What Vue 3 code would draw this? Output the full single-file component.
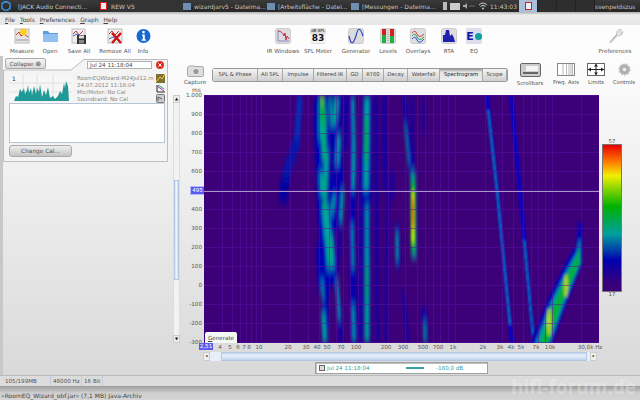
<script setup>
const menu = ['File', 'Tools', 'Preferences', 'Graph', 'Help']
const tabs = [
  { t: 'SPL & Phase', w: 45 }, { t: 'All SPL', w: 25 }, { t: 'Impulse', w: 31 },
  { t: 'Filtered IR', w: 33 }, { t: 'GD', w: 16 }, { t: 'RT60', w: 21 },
  { t: 'Decay', w: 24 }, { t: 'Waterfall', w: 32 }, { t: 'Spectrogram', w: 43, on: true },
  { t: 'Scope', w: 24 }
]
const yTicks = ['1.000', '900', '800', '700', '600', '500', '400', '300', '200', '100', '0', '-100', '-200', '-300']
const xTicks = [
  ['4', 222], ['5', 232], ['6', 240], ['7', 246], ['8', 251], ['10', 261], ['20', 290], ['30', 308],
  ['40', 319], ['50', 329], ['70', 343], ['100', 358], ['200', 388], ['300', 405], ['500', 425],
  ['700', 440], ['1k', 455], ['2k', 485], ['3k', 502], ['4k', 513], ['5k', 523], ['7k', 538], ['10k', 552]
]
const gridX = [222, 232, 240, 246, 251, 256, 261, 290, 308, 319, 329, 336, 343, 350, 358, 388, 405, 417, 425, 433, 440, 448, 455, 485, 502, 513, 523, 531, 538, 545, 552, 581]
const gridY = yTicks.map((_, i) => 95 + i * 19)

const BLUE = '#0000b4'
const TEAL = '#00a4a0'
const SEA = '#00b070'
const GREEN = '#00b000'

// ridges of the spectrogram: colour, width, path
const ridges = [
  ['#0030c0', 5, 'M300 95 L298 125 L296 150'],
  ['#0018b0', 8, 'M297 140 L288 168 L285 185'],
  ['#0000a0', 9, 'M285 180 L283 202'],

  // 40-50 Hz lobes
  [BLUE, 15, 'M322 95 C320 130 323 160 324 190 C325 230 330 260 328 285'],
  [BLUE, 6, 'M326 280 L325 343'],
  [BLUE, 4, 'M318 245 L320 290'],
  [BLUE, 11, 'M337 95 L335 130 L338 170 L337 200 L336 230'],
  [BLUE, 3, 'M340 235 L336 280 L340 310 L341 343'],
  [BLUE, 3, 'M346 95 L345 150'],
  [BLUE, 6, 'M352 95 L353 170 L352 230 L354 343'],
  [BLUE, 9, 'M367 95 L367 200'],
  [BLUE, 7, 'M367 200 L367 343'],
  [BLUE, 2.5, 'M361 150 L360 343'],
  [BLUE, 2.5, 'M376 95 L378 343'],
  [BLUE, 3, 'M384 95 L385 190'],
  [BLUE, 2, 'M388 190 L386 343'],
  [BLUE, 2.5, 'M392 170 L392 200'],
  [BLUE, 3, 'M404 95 L409 150 L412 180'],
  [BLUE, 2, 'M412 95 L413 175'],
  [BLUE, 1.5, 'M424 95 L424 135'],
  [BLUE, 4, 'M397 225 L398 268'],
  [BLUE, 2, 'M403 290 L408 343'],
  [BLUE, 4, 'M424 308 L426 343'],

  // brighter cores
  [TEAL, 6, 'M322 100 L322 140'],
  [TEAL, 4, 'M327 150 L325 190'],
  [TEAL, 4, 'M321 172 L322 195'],
  [TEAL, 7, 'M325 205 L328 240'],
  [TEAL, 8, 'M329 235 L331 268'],
  [TEAL, 3, 'M335 195 L331 215'],
  [TEAL, 3, 'M343 190 L341 222'],
  [TEAL, 4, 'M323 312 L325 343'],
  [TEAL, 2, 'M322 280 L323 300'],
  [TEAL, 4, 'M337 97 L334 125'],
  [TEAL, 2.5, 'M330 97 L331 125'],
  [TEAL, 3.5, 'M339 135 L337 165'],
  [TEAL, 2.5, 'M337 280 L339 320'],
  [TEAL, 2.5, 'M353 97 L354 150'],
  [TEAL, 3, 'M354 145 L353 190'],
  [TEAL, 2, 'M352 225 L353 268'],
  [TEAL, 2.5, 'M353 305 L354 343'],
  [TEAL, 5, 'M367 97 L366 190'],
  [TEAL, 3, 'M367 205 L367 245'],
  [TEAL, 3.5, 'M367 245 L367 343'],
  [TEAL, 1.5, 'M405 125 L409 165'],
  [TEAL, 2, 'M397 232 L397 262'],
  [TEAL, 2, 'M425 322 L425 343'],

  [SEA, 4, 'M324 112 L324 160'],
  [SEA, 3, 'M325 175 L325 215'],
  [GREEN, 4, 'M322 95 L323 122'],
  [SEA, 3, 'M336 100 L336 120'],
  [GREEN, 2.5, 'M367 118 L366 160'],
  [GREEN, 2, 'M367 265 L367 300'],
  [SEA, 2, 'M367 305 L367 340'],
  [SEA, 2.5, 'M329 240 L330 262'],
  ['#90d800', 2, 'M322 95 L322 102'],

  // the hot spot near 350 Hz
  [TEAL, 5, 'M413 172 L414 258'],
  [GREEN, 3.5, 'M413 178 L413 252']
]
const hot = [
  ['#d8e800', 3, 'M413 190 L413 244'],
  ['#ff9000', 2, 'M413 196 L413 230'],
  ['#f02000', 1.4, 'M413 203 L413 224']
]
const lines = [
  'M487 95 L497 190 L512 343',
  'M511 95 L520 190 L533 335'
]
</script>

<template>
  <div class="screen">
    <div class="taskbar">
      <svg class="tb-logo" width="10" height="10" viewBox="0 0 10 10"><path d="M5 0 L9 2.5 V7.5 L5 10 L1 7.5 V2.5 Z" fill="none" stroke="#3a8ad0" stroke-width="1.6" /></svg>
      <div class="task t-jack">[JACK Audio Connecti...</div>
      <div class="task t-rew"><i class="rew-ico"></i>REW V5</div>
      <div class="task t-a"><i class="folder"></i>wizardjarv5 - Dateima...</div>
      <div class="task t-b"><i class="folder"></i>[Arbeitsfläche - Datei...</div>
      <div class="task t-c"><i class="folder"></i>[Messungen - Dateima...</div>
      <div class="tray">
        <i class="bat"></i><i class="mail"></i>
        <svg width="12" height="8" viewBox="0 0 12 8"><path d="M0 3 H2 L4 1 V7 L2 5 H0 Z" fill="#aaa" /><path d="M6 4 H12" stroke="#666" /></svg>
        <svg width="10" height="8" viewBox="0 0 10 8"><path d="M1 3 Q5 -1 9 3 M2.5 4.5 Q5 2 7.5 4.5" fill="none" stroke="#ccc" /><circle cx="5" cy="6.5" r="1" fill="#ccc" /></svg>
      </div>
      <div class="clock">11:43:03</div>
      <div class="pager"><span class="page on"><i class="rew-ico"></i></span><span class="page"></span><span class="page"></span><span class="page"></span></div>
      <div class="user">svenpeldszus</div>
    </div>

    <div class="menubar">
      <span v-for="m in menu" :key="m" class="menu"><u>{{ m[0] }}</u>{{ m.slice(1) }}</span>
    </div>

    <div class="toolbar">
      <div class="tool" style="width:28px">
        <svg width="16" height="16" viewBox="0 0 16 16"><rect x="1" y="1" width="14" height="14" fill="#e4e4e4" stroke="#bbb" /><path d="M2 7 L5 4 L7 8 L10 6 L14 9" fill="none" stroke="#c33" /><path d="M2 12 H14" stroke="#99a" /><circle cx="9.5" cy="4" r="3.4" fill="#ffd020" /></svg>
        <span>Measure</span>
      </div>
      <div class="tool" style="width:28px">
        <svg width="17" height="16" viewBox="0 0 17 16"><path d="M1 3 H6 L7.5 5 H16 V14 H1 Z" fill="#5a9ee0" /><rect x="1" y="6" width="15" height="8" fill="#8fc0f0" /></svg>
        <span>Open</span>
      </div>
      <div class="tool" style="width:30px">
        <svg width="16" height="16" viewBox="0 0 16 16"><rect x="1" y="1" width="13" height="14" fill="#eee" stroke="#bbb" /><path d="M2 6 L5 3 L8 7 L12 3" fill="none" stroke="#c33" /><path d="M2 8 L6 6 L12 9" fill="none" stroke="#36c" /><rect x="6" y="7" width="9" height="9" fill="#333" /><rect x="8" y="7.5" width="5" height="3" fill="#ddd" /><rect x="8" y="12" width="5" height="3.5" fill="#888" /></svg>
        <span>Save All</span>
      </div>
      <div class="tool" style="width:42px">
        <svg width="16" height="16" viewBox="0 0 16 16"><rect x="1" y="1" width="14" height="14" fill="#eee" stroke="#bbb" /><path d="M2 6 L5 3 L8 7 L12 3" fill="none" stroke="#c33" /><path d="M2 11 L6 9 L12 12" fill="none" stroke="#36c" /><path d="M5 5 L14 15 M14 5 L5 15" stroke="#d01010" stroke-width="2.4" /></svg>
        <span>Remove All</span>
      </div>
      <div class="tool" style="width:14px">
        <svg width="15" height="15" viewBox="0 0 15 15"><circle cx="7.5" cy="7.5" r="7" fill="#1468d0" /><circle cx="7.5" cy="3.6" r="1.4" fill="#fff" /><path d="M6 6 H8.8 V11 H10 V12.2 H5.5 V11 H6.8 V7.2 H6 Z" fill="#fff" /></svg>
        <span>Info</span>
      </div>

      <div class="tool tool-mid" style="width:36px">
        <svg width="16" height="16" viewBox="0 0 16 16"><rect x="0.5" y="0.5" width="15" height="15" rx="2" fill="#dcdcdc" stroke="#ccc" /><path d="M3 2 V13 H14" fill="none" stroke="#88c" /><path d="M3 3 C6 3 8 5 9 8 L10 5 L11 12 L12 8 L14 11" fill="none" stroke="#c03050" /></svg>
        <span>IR Windows</span>
      </div>
      <div class="tool" style="width:34px">
        <div class="spl"><b>dB SPL</b><em>83</em></div>
        <span>SPL Meter</span>
      </div>
      <div class="tool" style="width:42px">
        <svg width="16" height="16" viewBox="0 0 16 16"><rect x="0.5" y="0.5" width="15" height="15" rx="2" fill="#dcdcdc" stroke="#ccc" /><path d="M1 8 C3 17 5 17 8 8 C10 -1 12 -1 15 8" fill="none" stroke="#3040c0" stroke-width="1.2" /></svg>
        <span>Generator</span>
      </div>
      <div class="tool" style="width:22px">
        <svg width="16" height="16" viewBox="0 0 16 16"><rect x="0.5" y="0.5" width="15" height="15" rx="2" fill="#dcdcdc" stroke="#ccc" /><rect x="2" y="1" width="4" height="14" fill="#20b040" /><rect x="2" y="1" width="4" height="6" fill="#d02020" /><rect x="10" y="1" width="4" height="14" fill="#20b040" /><rect x="10" y="1" width="4" height="7" fill="#d02020" /><path d="M8 2 V14" stroke="#999" stroke-dasharray="1 1" /></svg>
        <span>Levels</span>
      </div>
      <div class="tool" style="width:38px">
        <svg width="16" height="16" viewBox="0 0 16 16"><rect x="0.5" y="0.5" width="15" height="15" rx="2" fill="#dedede" stroke="#ccc" /><path d="M2 5 Q5 1 7 6 T14 6" fill="none" stroke="#d04040" /><path d="M2 8 Q5 4 7 9 T14 9" fill="none" stroke="#20a060" /><path d="M2 11 Q5 7 7 12 T14 11" fill="none" stroke="#3050d0" /></svg>
        <span>Overlays</span>
      </div>
      <div class="tool" style="width:24px">
        <svg width="16" height="16" viewBox="0 0 16 16"><rect x="0.5" y="0.5" width="15" height="15" rx="2" fill="#dedede" stroke="#ccc" /><path d="M2 14 V7 L4 7 L5 2 L8 2 L9 8 L11 6 L13 10 L14 14 Z" fill="#2020b0" /></svg>
        <span>RTA</span>
      </div>
      <div class="tool" style="width:26px">
        <div class="eq-ico"><b>E</b><i></i></div>
        <span>EQ</span>
      </div>

      <div class="tool tool-end" style="width:40px">
        <svg width="17" height="17" viewBox="0 0 17 17"><path d="M2 15 L10 6.5 M10 6.5 C9 3 12 1 15 2 L12.5 4.5 L14 6 L16 3.5 C16.5 7 13 9 10.5 8 L3 16 Z" fill="#eee" stroke="#aaa" stroke-width="0.8" /></svg>
        <span>Preferences</span>
      </div>
    </div>

    <div class="main">
      <aside class="side">
        <div class="cal">
          <svg class="cal-outline" width="166" height="107" viewBox="0 0 166 107">
            <path d="M0.5 14 H68 L81 3.5 H164.5 V105.5 H0.5 Z" fill="#f4f4f4" stroke="#bdbdbd" />
          </svg>
          <button class="collapse">Collapse <i>⊗</i></button>
          <div class="cal-top">
            <div class="date-input">Jul 24 11:18:04</div>
            <svg class="close" width="8" height="8" viewBox="0 0 8 8"><circle cx="4" cy="4" r="4" fill="#d8301c" /><path d="M2.4 2.4 L5.6 5.6 M5.6 2.4 L2.4 5.6" stroke="#fff" /></svg>
          </div>
          <div class="cal-info">
            <svg class="thumb" width="63" height="27" viewBox="0 0 63 27">
              <rect width="63" height="27" fill="#f6f6f6" />
              <path d="M0 9 H63 M0 18 H63 M14 0 V27 M28 0 V27 M44 0 V27" stroke="#e0e0e0" />
              <path d="M5 27 L7 22 L9 23 L11 15 L13 18 L15 14 L16 20 L18 16 L19 11 L20 19 L22 14 L23 21 L25 12 L27 20 L28 14 L30 18 L31 10 L33 23 L35 16 L37 21 L39 13 L41 24 L44 22 L46 25 L49 22 L51 17 L53 20 L55 9 L56 14 L57 7 L59 12 L60 27 Z" fill="#1f9a96" />
              <text x="3" y="7" class="thumb-t">1</text>
            </svg>
            <div class="meta">
              <div>RoomEQWizard-M24Jul12.m</div>
              <div>24.07.2012 11:18:04</div>
              <div>Mic/Meter: No Cal</div>
              <div>Soundcard: No Cal</div>
            </div>
            <div class="side-ico">
              <svg width="9" height="9" viewBox="0 0 9 9"><rect width="9" height="9" fill="#807030" /><path d="M0 8 L4 3 L6 5 L9 0" stroke="#f0d040" fill="none" /></svg>
              <svg width="9" height="9" viewBox="0 0 9 9"><path d="M1 1 V8 H9" fill="none" stroke="#222" /><path d="M1 2 L8 7" stroke="#a030c0" /><path d="M2 1 L8 5" stroke="#20a060" /></svg>
              <svg width="9" height="9" viewBox="0 0 9 9"><rect x="0.5" y="0.5" width="8" height="8" rx="1" fill="#ccc" stroke="#777" /><path d="M2 7 V3 L6 5" fill="none" stroke="#555" /></svg>
            </div>
          </div>
          <div class="cal-list"></div>
          <button class="change">Change Cal...</button>
        </div>
      </aside>

      <section class="center">
        <div class="head">
          <div class="capture">
            <svg width="17" height="12" viewBox="0 0 17 12"><rect x="0.5" y="1.5" width="16" height="10" rx="1.5" fill="#ddd" stroke="#aaa" /><rect x="2" y="0" width="5" height="2" fill="#ccc" /><circle cx="9" cy="6.5" r="3.2" fill="#999" stroke="#eee" /></svg>
            <span>Capture</span>
          </div>
          <div class="tabs">
            <div v-for="tab in tabs" :key="tab.t" class="tab" :class="{ on: tab.on }" :style="{ width: tab.w + 'px' }">{{ tab.t }}</div>
          </div>
          <div class="views">
            <div class="view" style="width:36px">
              <div class="scr-ico"><i></i><b></b></div>
              <span>Scrollbars</span>
            </div>
            <div class="view" style="width:36px">
              <svg width="18" height="13" viewBox="0 0 18 13"><rect x="0.5" y="0.5" width="17" height="12" fill="#fff" stroke="#888" /><path d="M6 1 V12 M9.5 1 V12 M12 1 V12 M14 1 V12 M15.5 1 V12" stroke="#bbb" /></svg>
              <span>Freq. Axis</span>
            </div>
            <div class="view" style="width:24px">
              <svg width="18" height="13" viewBox="0 0 18 13"><rect x="0.5" y="0.5" width="17" height="12" fill="#fff" stroke="#666" /><path d="M1 6.5 H17 M9 1 V12" stroke="#222" /><path d="M1 6.5 L4 4.5 V8.5 Z M17 6.5 L14 4.5 V8.5 Z M9 1 L7 3.5 H11 Z M9 12 L7 9.5 H11 Z" fill="#222" /></svg>
              <span>Limits</span>
            </div>
            <div class="view" style="width:32px">
              <svg width="13" height="13" viewBox="0 0 13 13"><circle cx="6.5" cy="6.5" r="5" fill="#aaa" stroke="#bbb" stroke-width="2" stroke-dasharray="2 1" /><circle cx="6.5" cy="6.5" r="2" fill="#e8e8e8" /></svg>
              <span>Controls</span>
            </div>
          </div>
        </div>

        <div class="body">
          <div class="vscroll">
            <div class="sb-btn">▲</div>
            <div class="vtrack"><div class="vthumb"></div></div>
            <div class="sb-btn">▼</div>
          </div>
          <div class="yaxis">
            <span class="ms">ms</span>
            <span v-for="y in yTicks" :key="y" class="ytick">{{ y }}</span>
            <span class="cursor-tag">495</span>
          </div>
          <div class="plot">
            <svg class="spec" width="395" height="248" viewBox="204 95 395 248">
              <defs>
                <filter id="soft" filterUnits="userSpaceOnUse" x="204" y="60" width="395" height="320"><feGaussianBlur stdDeviation="1.5 5" /></filter>
                <filter id="hot" filterUnits="userSpaceOnUse" x="204" y="60" width="395" height="320"><feGaussianBlur stdDeviation="0.8 3" /></filter>
                <filter id="thin" filterUnits="userSpaceOnUse" x="204" y="60" width="395" height="320"><feGaussianBlur stdDeviation="0.8" /></filter>
                <filter id="wedge" filterUnits="userSpaceOnUse" x="204" y="60" width="395" height="320"><feGaussianBlur stdDeviation="1.7" /></filter>
              </defs>
              <rect x="204" y="95" width="395" height="248" fill="#3c0078" />
              <g filter="url(#soft)">
                <path v-for="(r, i) in ridges" :key="i" :d="r[2]" :stroke="r[0]" :stroke-width="r[1]" fill="none" />
              </g>
              <g filter="url(#hot)">
                <path v-for="(r, i) in hot" :key="i" :d="r[2]" :stroke="r[0]" :stroke-width="r[1]" fill="none" />
              </g>
              <g filter="url(#thin)">
                <path v-for="l in lines" :key="l" :d="l" stroke="#0000d0" stroke-width="3.4" fill="none" />
                <path d="M488 110 L497 190 L510 325" stroke="#00a4b0" stroke-width="1.3" fill="none" />
                <path d="M524 240 L533 335" stroke="#00a4b0" stroke-width="1.2" fill="none" />
              </g>
              <g filter="url(#wedge)">
                <path d="M530 345 L548 300 L566 262 L576 246 L579 222 L582 222 L582 264 L566 305 L552 345 Z" fill="#0000c0" />
                <path d="M535 345 L551 303 L567 270 L577 252 L580 236 L581 262 L564 303 L549 345 Z" fill="#00a090" />
                <path d="M540 345 L553 308 L566 278 L575 262 L579 248 L579 264 L562 302 L547 345 Z" fill="#00b030" />
                <ellipse cx="566" cy="286" rx="1.6" ry="12" fill="#c8e000" />
                <ellipse cx="549" cy="322" rx="2" ry="14" fill="#b8e000" />
              </g>
              <g stroke="#5a10a8" stroke-width="1" opacity="0.5">
                <path v-for="x in gridX" :key="x" :d="`M${x + 0.5} 95 V343`" />
                <path v-for="y in gridY" :key="y" :d="`M204 ${y + 0.5} H599`" />
              </g>
              <path d="M204 191.5 H599" stroke="#a898c8" stroke-width="1" />
            </svg>
            <button class="generate"><u>G</u>enerate</button>
          </div>
          <div class="scale">
            <span>57</span>
            <div class="ramp"></div>
            <span>17</span>
          </div>
        </div>

        <div class="xaxis">
          <span class="x-tag">2,51</span>
          <span v-for="t in xTicks" :key="t[0]" class="xtick" :style="{ left: t[1] - 172 + 'px' }">{{ t[0] }}</span>
          <span class="xtick" style="left:420px">30,0k Hz</span>
        </div>
        <div class="hscroll">
          <div class="sb-btn">◂</div>
          <div class="htrack"><div class="hthumb"></div></div>
          <div class="sb-btn">▸</div>
        </div>
        <div class="legend">
          <i class="check"></i>
          <span class="l-name">Jul 24 11:18:04</span>
          <i class="l-line"></i>
          <span class="l-val">-180,0 dB</span>
        </div>
      </section>
    </div>

    <div class="status">
      <span style="width:48px">105/199MB</span>
      <span style="width:31px">48000 Hz</span>
      <span style="width:21px">16 Bit</span>
    </div>
    <div class="bottom">»RoomEQ_Wizard_obf.jar« (7,1 MB) Java-Archiv</div>
    <div class="mark">hifi-forum.de</div>
  </div>
</template>

<style scoped>
.screen {
  position: relative;
  width: 640px;
  height: 400px;
  overflow: hidden;
  display: flex;
  flex-direction: column;
  font-family: "DejaVu Sans", sans-serif;
  font-size: 6px;
  color: #555;
  background: #ddd;
}

/* desktop panel */
.taskbar {
  height: 12px;
  flex: none;
  display: flex;
  align-items: center;
  background: linear-gradient(#3a3a3a, #262626);
  color: #c8c8c8;
  font-size: 6px;
  white-space: nowrap;
}
.tb-logo { margin: 0 2px 0 1px; flex: none; }
.task { display: flex; align-items: center; gap: 2px; height: 12px; overflow: hidden; }
.t-jack { width: 86px; padding-left: 5px; box-sizing: border-box; }
.t-rew { width: 83px; background: #333; padding-left: 1px; }
.t-a { width: 84px; }
.t-b { width: 84px; }
.t-c { width: 92px; }
.rew-ico { display: inline-block; width: 7px; height: 8px; background: #eee; border: 1px solid #c22; box-sizing: border-box; margin-right: 2px; }
.folder { display: inline-block; width: 8px; height: 7px; background: #6f8fb0; margin-right: 1px; flex: none; }
.tray { display: flex; align-items: center; gap: 3px; width: 47px; flex: none; }
.bat { width: 4px; height: 8px; background: #bbb; }
.mail { width: 10px; height: 7px; background: #ccc; }
.clock { width: 29px; flex: none; }
.pager { display: flex; height: 12px; width: 76px; flex: none; }
.page { width: 18px; background: #2e2e2e; border-right: 1px solid #222; display: flex; align-items: center; justify-content: center; }
.page.on { background: #a8c0dc; }
.page .rew-ico { margin: 0; }
.user { flex: none; }

.menubar {
  height: 13px;
  flex: none;
  box-sizing: border-box;
  padding: 3px 0 0 5px;
  display: flex;
  gap: 5px;
  background: linear-gradient(#b0b0b0 0, #ececec 3px, #e6e6e6);
  color: #444;
}
.menu { line-height: 9px; }

.toolbar {
  height: 31px;
  flex: none;
  display: flex;
  padding-left: 8px;
  background: #fdfdfd;
}
.tool { display: flex; flex-direction: column; align-items: center; flex: none; padding-top: 3px; }
.tool svg { display: block; height: 16px; }
.tool span { margin-top: 4px; white-space: nowrap; line-height: 7px; font-size: 5.6px; }
.tool-mid { margin-left: 115px; }
.tool-end { margin-left: 108px; }
.spl { width: 16px; height: 16px; background: #ddd; border-radius: 2px; text-align: center; line-height: 7px; color: #111; }
.spl b { display: block; font-size: 4px; font-weight: normal; line-height: 6px; }
.spl em { display: block; font-size: 9px; font-style: normal; font-weight: bold; line-height: 9px; background: #f4f4f4; }
.eq-ico { width: 16px; height: 16px; background: #dde; border-radius: 2px; display: flex; align-items: center; justify-content: center; gap: 1px; color: #1018a0; }
.eq-ico b { font-size: 11px; line-height: 11px; }
.eq-ico i { width: 7px; height: 7px; border-radius: 50%; background: #10a0a0; }

/* main window body */
.main {
  flex: 1;
  min-height: 0;
  display: flex;
  background: linear-gradient(#fdfdfd, #d9d9d9);
  border-left: 3px solid #c8c8c8;
}
.side { width: 167px; flex: none; }
.cal { position: relative; width: 166px; height: 107px; }
.cal-outline { position: absolute; left: 0; top: 0; }
.collapse {
  position: absolute;
  left: 2px;
  top: 2px;
  width: 41px;
  height: 11px;
  padding: 0;
  font: 5.6px "DejaVu Sans", sans-serif;
  color: #555;
  background: linear-gradient(#f6f6f6, #d8d8d8);
  border: 1px solid #aaa;
  border-radius: 2px;
}
.collapse i { font-style: normal; font-size: 7px; }
.cal-top { position: absolute; left: 84px; top: 5px; display: flex; align-items: center; gap: 4px; }
.date-input { width: 65px; height: 8px; box-sizing: border-box; background: #fff; border: 1px solid #b0b0b0; color: #444; line-height: 7px; padding-left: 2px; font-size: 5.6px; }
.cal-info { position: absolute; left: 6px; top: 18px; display: flex; width: 155px; }
.thumb { flex: none; }
.thumb-t { font-size: 6px; fill: #333; }
.meta { margin-left: 5px; font-size: 5.5px; line-height: 7px; color: #888; padding-top: 1px; white-space: nowrap; width: 78px; }
.side-ico { display: flex; flex-direction: column; gap: 1px; margin-left: 2px; }
.cal-list { position: absolute; left: 6px; top: 47px; width: 156px; height: 40px; box-sizing: border-box; background: #fff; border: 1px solid #b8c4d8; }
.change {
  position: absolute;
  left: 6px;
  top: 89px;
  width: 63px;
  height: 12px;
  padding: 0;
  font: 5.8px "DejaVu Sans", sans-serif;
  color: #555;
  background: linear-gradient(#eee, #c4c4c4);
  border: 1px solid #aaa;
  border-radius: 3px;
}

.center { flex: 1; min-width: 0; display: flex; flex-direction: column; }
.head { height: 39px; flex: none; display: flex; }
.capture { width: 43px; flex: none; display: flex; flex-direction: column; align-items: center; padding: 9px 0 0 7px; box-sizing: border-box; font-size: 5.6px; }
.capture svg { flex: none; }
.capture span { line-height: 8px; margin-top: 1px; }
.tabs {
  display: flex;
  height: 12px;
  margin-top: 13px;
  border-radius: 2px;
  box-shadow: 0 0 0 1px #999;
  flex: none;
}
.tab {
  flex: none;
  box-sizing: border-box;
  text-align: center;
  line-height: 11px;
  font-size: 5.3px;
  color: #444;
  white-space: nowrap;
  background: linear-gradient(#f4f4f4, #cfcfcf);
  border-right: 1px solid #aaa;
}
.tab.on { background: linear-gradient(#9a9a9a 0, #e4e4e4 3px, #ececec); color: #222; }
.views { display: flex; margin-left: 5px; padding-top: 7px; }
.view { display: flex; flex-direction: column; align-items: center; flex: none; font-size: 5.4px; }
.view svg { flex: none; }
.view span { margin-top: 3px; line-height: 7px; white-space: nowrap; }
.scr-ico { width: 21px; height: 14px; box-sizing: border-box; background: #ccc; border: 1px solid #666; border-radius: 2px; padding: 2px; display: flex; flex-direction: column; gap: 1px; }
.scr-ico i { display: block; height: 6px; margin-left: 3px; background: #f4f4f4; }
.scr-ico b { display: block; height: 2px; background: #666; }

.body { display: flex; height: 248px; flex: none; }
.vscroll { width: 7px; flex: none; margin-left: 3px; display: flex; flex-direction: column; }
.sb-btn { width: 7px; height: 8px; flex: none; background: #eee; border: 1px solid #ccc; box-sizing: border-box; font-size: 4px; line-height: 6px; text-align: center; color: #111; overflow: hidden; }
.vtrack { flex: 1; background: #f2f2f2; padding-top: 77px; border: 1px solid #ddd; border-width: 0 1px; box-sizing: border-box; min-height: 0; }
.vthumb { height: 100px; background: linear-gradient(90deg, #cfe0f4, #eef4fb, #c4d8ee); border: 1px solid #b4c8e4; box-sizing: border-box; }
.yaxis { position: relative; width: 22px; flex: none; display: flex; flex-direction: column; justify-content: space-between; align-items: flex-end; margin: -3px 0; padding-right: 2px; color: #555; }
.ytick { line-height: 7px; font-size: 5.6px; }
.ms { position: absolute; right: 3px; top: -6px; line-height: 7px; }
.cursor-tag { position: absolute; right: 0; top: 95px; width: 13px; height: 7px; line-height: 7px; text-align: center; color: #fff; background: #5a5af0; outline: 1px solid #b8b8ff; font-size: 5.6px; }
.plot { position: relative; width: 395px; height: 248px; flex: none; }
.spec { display: block; }
.generate {
  position: absolute;
  left: 1px;
  bottom: 0;
  width: 32px;
  height: 11px;
  padding: 0;
  font: 5.6px "DejaVu Sans", sans-serif;
  color: #444;
  background: #f2f8f4;
  border: 0;
  border-radius: 2px 2px 0 0;
}
.scale { width: 20px; flex: none; margin-left: 3px; display: flex; flex-direction: column; align-items: center; padding-top: 44px; font-size: 5.4px; }
.scale span { line-height: 5px; }
.ramp {
  width: 20px;
  height: 148px;
  flex: none;
  box-sizing: border-box;
  border: 1px solid #777;
  background: linear-gradient(#e80000 0, #ff8000 12%, #f0f000 21%, #00b000 42%, #00a0a0 61%, #0000b0 79%, #3c0078 96%);
}

.xaxis { position: relative; height: 9px; flex: none; }
.xtick { position: absolute; top: 1px; line-height: 7px; transform: translateX(-50%); white-space: nowrap; font-size: 5.6px; }
.x-tag { position: absolute; left: 29px; top: 0; width: 14px; height: 7px; line-height: 7px; text-align: center; color: #fff; background: #5a5af0; font-size: 5.6px; }
.hscroll { display: flex; height: 9px; flex: none; margin-left: 33px; width: 394px; }
.hscroll .sb-btn { height: 9px; }
.htrack { flex: 1; background: #e8eef8; padding: 0 3px 0 11px; display: flex; }
.hthumb { flex: 1; background: linear-gradient(#c8d8f0, #e8f0fb 40%, #c0d4ee); border: 1px solid #b4c8e4; box-sizing: border-box; }
.legend {
  display: flex;
  align-items: center;
  width: 173px;
  height: 12px;
  box-sizing: border-box;
  margin: 1px 0 0 145px;
  padding-left: 3px;
  flex: none;
  background: #fff;
  border: 1px solid #a0a0a0;
  box-shadow: inset 1px 1px 0 #c0c0c0;
  color: #3aa0a0;
  font-size: 5.6px;
}
.check { width: 6px; height: 6px; border: 1px solid #666; box-sizing: border-box; background: #ddd; }
.l-name { margin-left: 2px; width: 79px; }
.l-line { width: 18px; height: 1.5px; background: #3aa0a0; }
.l-val { margin-left: 12px; }

.status {
  height: 11px;
  flex: none;
  display: flex;
  box-sizing: border-box;
  padding-left: 3px;
  background: #dcdcdc;
  border-top: 1px solid #bbb;
  color: #555;
  font-size: 5.6px;
  line-height: 10px;
}
.status span { padding-left: 2px; box-sizing: border-box; border-right: 1px solid #c0cce4; }
.bottom {
  height: 14px;
  flex: none;
  box-sizing: border-box;
  padding: 6px 0 0 1px;
  background: linear-gradient(#9c9c9c, #cfcfcf 7px, #d4d4d4);
  color: #444;
  font-size: 6px;
  line-height: 7px;
}
.mark {
  position: absolute;
  right: 4px;
  bottom: 2px;
  font: bold 19px "Open Sans", sans-serif;
  line-height: 22px;
  color: rgba(255, 255, 255, 0.28);
}
</style>
